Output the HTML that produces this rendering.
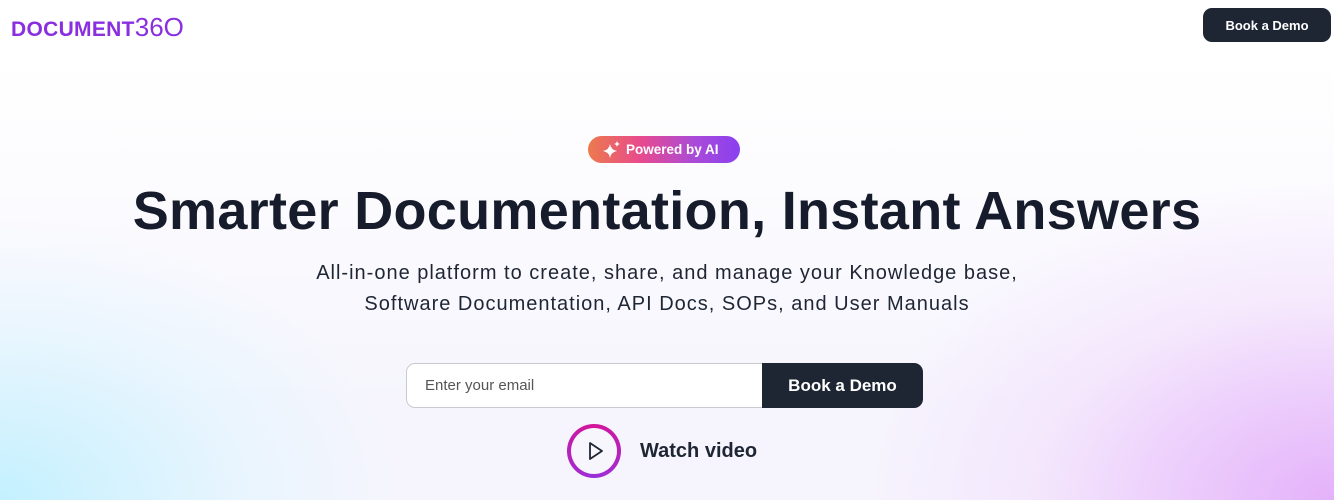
<!DOCTYPE html>
<html><head><meta charset="utf-8"><style>
*{margin:0;padding:0;box-sizing:border-box}
body{width:1334px;height:500px;overflow:hidden;font-family:"Liberation Sans",sans-serif;position:relative;
background:
radial-gradient(ellipse 600px 400px at 1334px 500px,rgba(226,170,250,.9),rgba(240,210,252,.4) 50%,transparent 80%),
radial-gradient(ellipse 500px 350px at 0px 500px,rgba(190,240,255,.9),rgba(215,245,255,.4) 50%,transparent 80%),
linear-gradient(#fff 0,#fff 60px,#f6f5fd 400px);}
.logo{position:absolute;left:11px;top:12px;font-weight:bold;font-size:21px;color:#8a2fe0;letter-spacing:0.3px}
.logo span{font-weight:normal;font-size:26px;letter-spacing:0}
.nb{position:absolute;left:1203px;top:8px;width:128px;height:34px;background:#1e2533;color:#fff;border-radius:9px;font-size:13px;font-weight:bold;display:flex;align-items:center;justify-content:center}
.badge{position:absolute;left:588px;top:136px;width:152px;height:27px;border-radius:14px;background:linear-gradient(90deg,#ec7a4c,#e84a8e 35%,#a94bd8 70%,#8a3ff0);color:#fff;font-size:13.5px;font-weight:bold;display:flex;align-items:center;padding-left:38px}
.badge svg{position:absolute;left:14px;top:5px}
h1{position:absolute;left:0;width:1334px;top:180px;text-align:center;font-size:54px;font-weight:bold;color:#161c2b;letter-spacing:0.3px}
.sub{position:absolute;left:0;width:1334px;top:258px;text-align:center;font-size:20px;line-height:31px;color:#1e2533;letter-spacing:1px}
.in{position:absolute;left:406px;top:363px;width:360px;height:45px;border:1px solid #c9cbd3;border-radius:9px 0 0 9px;background:#fff;font-size:15px;color:#555;padding:13px 18px}
.bb{position:absolute;left:762px;top:363px;width:161px;height:45px;background:#1e2533;border-radius:0 9px 9px 0;color:#fff;font-weight:bold;font-size:17px;display:flex;align-items:center;justify-content:center}
.play{position:absolute;left:567px;top:424px;width:54px;height:54px;border-radius:50%;background:conic-gradient(#d4159a,#9a2fd8,#d4159a);}
.play div{position:absolute;left:4px;top:4px;width:46px;height:46px;border-radius:50%;background:#f7f6fd}
.wv{position:absolute;left:640px;top:440px;font-size:20px;font-weight:bold;color:#1e2533}
</style></head><body>
<div class="logo">DOCUMENT<span>36O</span></div>
<div class="nb">Book a Demo</div>
<div class="badge"><svg width="20" height="18" viewBox="0 0 20 18"><path d="M8 3 Q9 9 15 10 Q9 11 8 17 Q7 11 1 10 Q7 9 8 3Z" fill="#fff"/><path d="M15 0 Q15.5 2.5 18 3 Q15.5 3.5 15 6 Q14.5 3.5 12 3 Q14.5 2.5 15 0Z" fill="#fff"/></svg>Powered by AI</div>
<h1>Smarter Documentation, Instant Answers</h1>
<div class="sub">All-in-one platform to create, share, and manage your Knowledge base,<br>Software Documentation, API Docs, SOPs, and User Manuals</div>
<div class="in">Enter your email</div>
<div class="bb">Book a Demo</div>
<div class="play"><div></div><svg style="position:absolute;left:21px;top:17px" width="16" height="20" viewBox="0 0 16 20"><path d="M2 2 L14 10 L2 18Z" fill="none" stroke="#1e2533" stroke-width="1.8" stroke-linejoin="round"/></svg></div>
<div class="wv">Watch video</div>
</body></html>
